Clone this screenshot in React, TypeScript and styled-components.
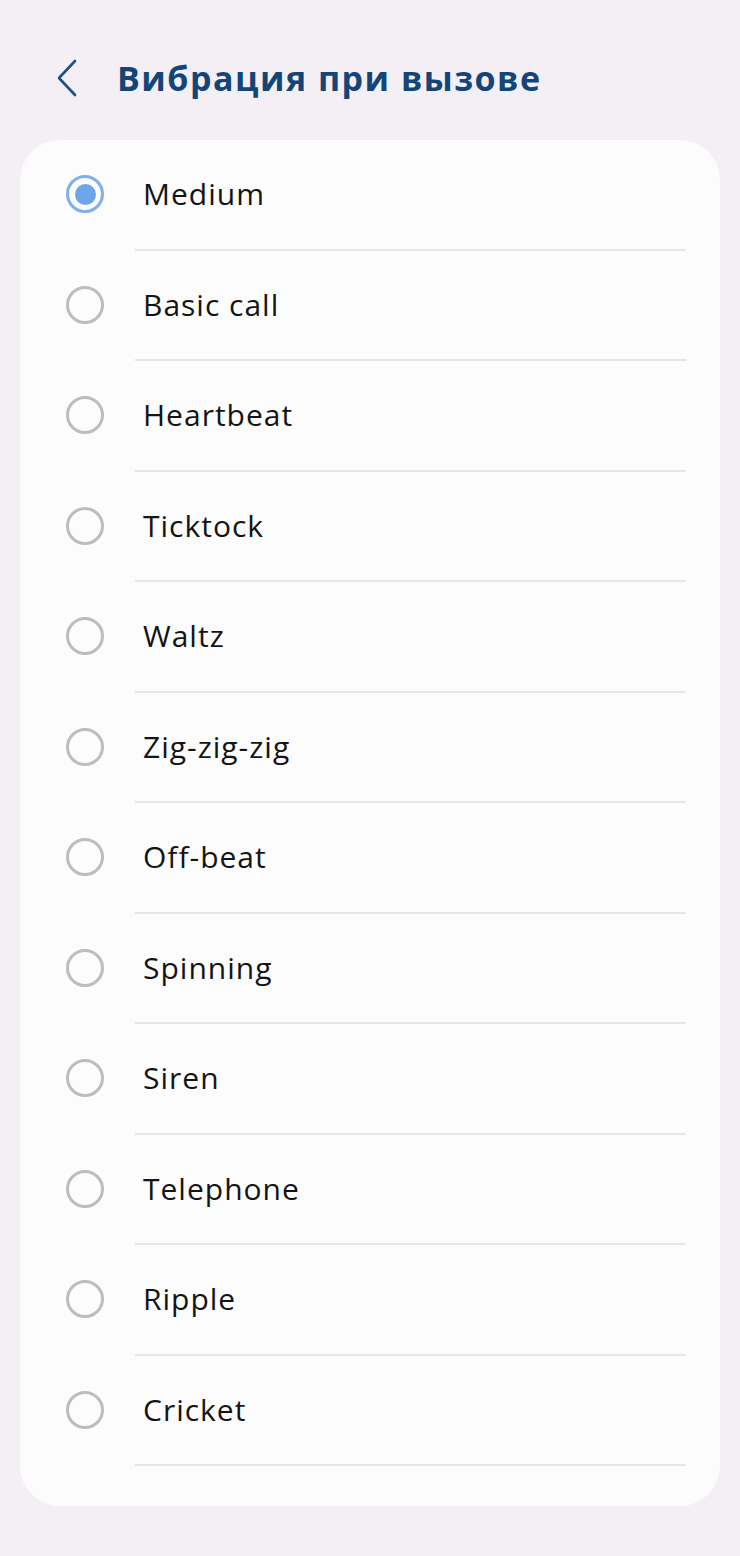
import styled, { createGlobalStyle } from "styled-components";

const GlobalStyle = createGlobalStyle`
  html, body {
    margin: 0;
    padding: 0;
    background: #f4eff5;
    font-family: "Open Sans", "Noto Sans", sans-serif;
  }
`;

const patterns = [
  "Medium",
  "Basic call",
  "Heartbeat",
  "Ticktock",
  "Waltz",
  "Zig-zig-zig",
  "Off-beat",
  "Spinning",
  "Siren",
  "Telephone",
  "Ripple",
  "Cricket",
];

function App() {
  const selected = "Medium";

  return (
    <Page>
      <GlobalStyle />
      <Header>
        <BackButton aria-label="back">
          <svg width="24" height="38" viewBox="0 0 24 38" fill="none">
            <path
              d="M20 2 L4 19 L20 36"
              stroke="#1d4f82"
              strokeWidth="2.6"
              strokeLinecap="round"
              strokeLinejoin="round"
            />
          </svg>
        </BackButton>
        <Title>Вибрация при вызове</Title>
      </Header>
      <Card>
        {patterns.map((name) => (
          <Item key={name}>
            <Row>
              <Radio $checked={name === selected} />
              <Label>{name}</Label>
            </Row>
            <Divider />
          </Item>
        ))}
      </Card>
    </Page>
  );
}

const Page = styled.div`
  width: 740px;
  min-height: 1556px;
  background: #f4eff5;
`;

const Header = styled.div`
  height: 140px;
  box-sizing: border-box;
  padding: 16px 0 0 55px;
  display: flex;
  align-items: center;
`;

const BackButton = styled.div`
  width: 24px;
  height: 38px;
  display: flex;
  align-items: center;
  justify-content: center;
  margin-right: 38px;
`;

const Title = styled.h1`
  margin: 0;
  font-size: 34px;
  font-weight: 700;
  color: #134579;
  line-height: 1.2;
  letter-spacing: 1.5px;
`;

const Card = styled.div`
  margin: 0 20px;
  background: #fcfcfc;
  border-radius: 40px;
  padding-bottom: 40px;
`;

const Item = styled.div`
  display: flex;
  flex-direction: column;
`;

const Row = styled.div`
  height: 108.5px;
  display: flex;
  align-items: center;
  padding-left: 46px;
`;

const Radio = styled.span<{ $checked: boolean }>`
  flex: none;
  width: 38px;
  height: 38px;
  box-sizing: border-box;
  border-radius: 50%;
  border: 3px solid ${(p) => (p.$checked ? "#7fb0e8" : "#bdbdbd")};
  display: flex;
  align-items: center;
  justify-content: center;
  &::after {
    content: "";
    display: ${(p) => (p.$checked ? "block" : "none")};
    width: 21px;
    height: 21px;
    border-radius: 50%;
    background: #6ea5e8;
  }
`;

const Label = styled.span`
  margin-left: 39px;
  font-size: 30px;
  line-height: 1.2;
  letter-spacing: 1px;
  color: #141414;
`;

const Divider = styled.div`
  height: 2px;
  margin: 0 34px 0 115px;
  background: #e6e6e8;
`;

export default App;
